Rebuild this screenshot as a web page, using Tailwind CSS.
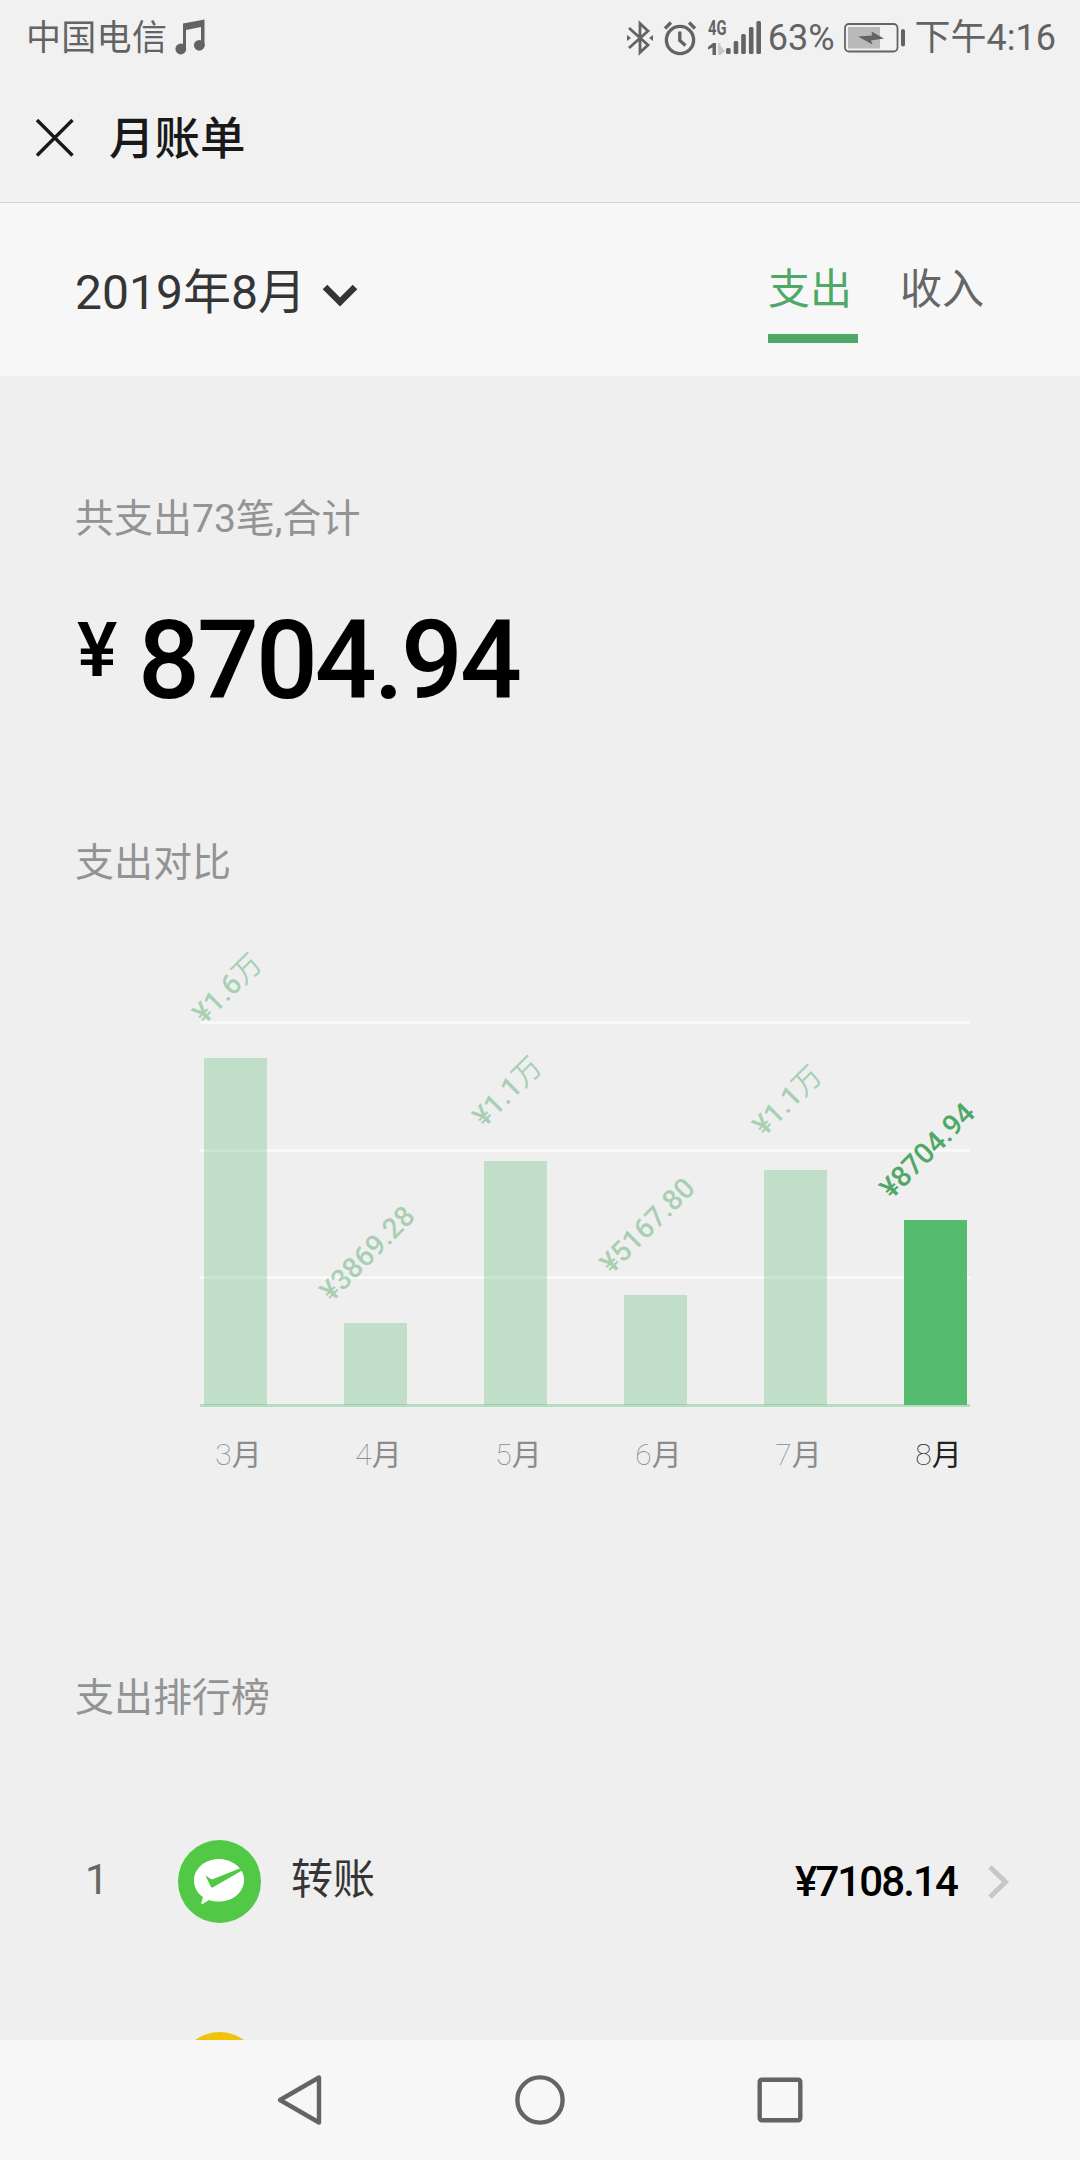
<!DOCTYPE html>
<html lang="zh-CN">
<head>
    <meta charset="UTF-8">
    <meta name="viewport" content="width=device-width, initial-scale=1.0">
    <title>月账单</title>
    <script src="https://cdn.jsdelivr.net/npm/@tailwindcss/browser@4"></script>
</head>
<body class="w-[1080px] h-[2160px] overflow-hidden flex flex-col bg-[#efefef] font-['Roboto','Noto_Sans_CJK_SC',sans-serif] leading-none">
    <!-- Status bar -->
    <div class="h-[74px] shrink-0 flex items-center pt-[2px] pl-[26px] pr-[24px] bg-[#f1f1f1] text-[#636363] text-[36px]">
        <span class="text-[35px] tracking-[0.3px]">中国电信</span>
        <svg class="ml-[8px] -mt-[2px] w-[30px] h-[36px]" viewBox="0 0 30 36" fill="currentColor">
            <path d="M8 4.5 L29.5 0.5 V27 H26 V8 L11 11 V30 H8 Z"/>
            <circle cx="5.8" cy="30" r="5.4"/>
            <circle cx="24.3" cy="26.3" r="5.4"/>
        </svg>
        <div class="ml-auto flex items-center">
            <svg class="w-[28px] h-[36px]" viewBox="0 0 28 36" fill="none" stroke="currentColor" stroke-width="2.8">
                <path d="M3 8 L22 25 L14 32.5 V3.5 L22 11 L3 28"/>
                <path d="M1 15 L5 18 L1 21 Z M27 15 L23 18 L27 21 Z" fill="currentColor" stroke="none"/>
            </svg>
            <svg class="ml-[9px] w-[34px] h-[36px]" viewBox="0 0 34 36" fill="none" stroke="currentColor" stroke-width="3.4">
                <circle cx="17" cy="20" r="13.6"/>
                <path d="M16.8 11.5 V20.5 L22.5 25.5"/>
                <path d="M2 8.5 L8 2.5 M32 8.5 L26 2.5"/>
            </svg>
            <div class="ml-[11px] w-[19px] h-[36px] flex flex-col justify-between">
                <span class="block h-[17px] w-[30px] origin-top-left scale-x-[0.7] text-[21px] leading-[17px] font-bold">4G</span>
                <svg class="w-[19px] h-[14px]" viewBox="0 0 19 14" fill="currentColor">
                    <path d="M0 5 L5 1 H8 V13 H4.5 V5.5 L0 7.5 Z"/>
                    <path class="text-[#c9c9c9]" d="M10 1 H12.5 V4 L17 9 L12.5 13 H10 Z"/>
                </svg>
            </div>
            <svg class="-ml-[1px] w-[36px] h-[36px]" viewBox="0 0 36 36" fill="currentColor">
                <rect x="0" y="28" width="4.6" height="6" rx="1.5"/>
                <rect x="7.7" y="21" width="4.6" height="13" rx="1.5"/>
                <rect x="15.2" y="14" width="4.6" height="20" rx="1.5"/>
                <rect x="22.9" y="7" width="4.6" height="27" rx="1.5"/>
                <rect x="30.4" y="1" width="4.6" height="33" rx="1.5"/>
            </svg>
            <span class="ml-[6px]">63%</span>
            <svg class="ml-[9px] w-[62px] h-[30px]" viewBox="0 0 62 30" fill="none" stroke="currentColor">
                <rect x="1" y="1" width="52.5" height="27.5" rx="4" stroke-width="1.8"/>
                <rect x="4" y="4" width="32" height="21.5" fill="#b9b9b9" stroke="none"/>
                <path d="M14 13.5 L28 12.5 L27.5 8.5 L40 15.5 L27 17.5 L28.5 21.5 Z" fill="currentColor" stroke="none"/>
                <rect x="57" y="6" width="4" height="17.5" rx="2" fill="currentColor" stroke="none"/>
            </svg>
            <span class="ml-[9px]">下午4:16</span>
        </div>
    </div>

    <!-- Title bar -->
    <header class="h-[129px] shrink-0 flex items-center pl-[36px] bg-[#f1f1f1] border-b border-[#d4d4d4] text-[#191919]">
        <svg class="w-[38px] h-[38px]" viewBox="0 0 38 38" fill="none" stroke="currentColor" stroke-width="3.4">
            <path d="M1 1 L36.5 36.5 M36.5 1 L1 36.5"/>
        </svg>
        <h1 class="ml-[35px] pt-[4px] text-[45.5px] font-medium">月账单</h1>
    </header>

    <!-- Month picker and tabs -->
    <div class="h-[173px] shrink-0 flex justify-between bg-[#f7f7f7] pl-[75px] pr-[84px]">
        <div class="flex items-center pt-[6px] text-[48px] text-[#353535]">
            <span>2019年8月</span>
            <svg class="ml-[16px] mt-[6px] w-[36px] h-[24px]" viewBox="0 0 36 24" fill="none" stroke="currentColor" stroke-width="6.5">
                <path d="M3 3 L18 18 L33 3"/>
            </svg>
        </div>
        <div class="flex pt-[66px] text-[42px]">
            <div class="w-[90px] h-[74px] border-b-[9px] border-[#50a868] text-[#50a868]">支出</div>
            <div class="ml-[42px] w-[96px] text-[#666]">收入</div>
        </div>
    </div>

    <main class="h-[1664px] shrink-0 overflow-hidden px-[75px] text-[#939393]">
        <p class="pt-[124px] text-[39px]">共支出73笔,合计</p>
        <div class="mt-[68px] h-[96px] flex items-start text-black font-medium">
            <span class="w-[63px] pt-[5px] pl-[2px] text-[76px]">¥</span>
            <span class="text-[109px] tracking-[-3px]">8704.94</span>
        </div>

        <h2 class="mt-[141px] text-[39px]">支出对比</h2>

        <!-- Bar chart -->
        <div class="relative ml-[125px] mt-[138px] w-[770px] h-[386px]">
            <div class="absolute inset-0 flex flex-col justify-between">
                <div class="h-[3px] bg-[#f9f9f9]"></div>
                <div class="h-[3px] bg-[#f9f9f9]"></div>
                <div class="h-[3px] bg-[#f9f9f9]"></div>
                <div class="h-[3px] bg-[#b6dcc2]"></div>
            </div>
            <div class="absolute inset-0 pl-[4px] pb-[2px] flex items-end gap-[77px] text-[28.5px] font-medium text-[#50a868]/45">
                <div class="relative w-[63px] h-[347px] bg-[#55bb6e]/30">
                    <span class="absolute left-[24px] -top-[69px] -translate-1/2 -rotate-45 whitespace-nowrap">¥1.6<span class="font-normal">万</span></span>
                </div>
                <div class="relative w-[63px] h-[82px] bg-[#55bb6e]/30">
                    <span class="absolute left-[24px] -top-[69px] -translate-1/2 -rotate-45 whitespace-nowrap">¥3869.28</span>
                </div>
                <div class="relative w-[63px] h-[244px] bg-[#55bb6e]/30">
                    <span class="absolute left-[24px] -top-[69px] -translate-1/2 -rotate-45 whitespace-nowrap">¥1.1<span class="font-normal">万</span></span>
                </div>
                <div class="relative w-[63px] h-[110px] bg-[#55bb6e]/30">
                    <span class="absolute left-[24px] -top-[69px] -translate-1/2 -rotate-45 whitespace-nowrap">¥5167.80</span>
                </div>
                <div class="relative w-[63px] h-[235px] bg-[#55bb6e]/30">
                    <span class="absolute left-[24px] -top-[69px] -translate-1/2 -rotate-45 whitespace-nowrap">¥1.1<span class="font-normal">万</span></span>
                </div>
                <div class="relative w-[63px] h-[185px] bg-[#55bb6e] text-[#50a868]">
                    <span class="absolute left-[24px] -top-[69px] -translate-1/2 -rotate-45 whitespace-nowrap">¥8704.94</span>
                </div>
            </div>
        </div>
        <div class="ml-[132px] mt-[33px] flex gap-[77px] text-[30px] text-[#8c8c8c]">
            <div class="w-[63px] text-center"><span class="font-thin">3</span>月</div>
            <div class="w-[63px] text-center"><span class="font-thin">4</span>月</div>
            <div class="w-[63px] text-center"><span class="font-thin">5</span>月</div>
            <div class="w-[63px] text-center"><span class="font-thin">6</span>月</div>
            <div class="w-[63px] text-center"><span class="font-thin">7</span>月</div>
            <div class="w-[63px] text-center text-[#222]"><span class="font-thin">8</span>月</div>
        </div>

        <h2 class="mt-[209px] text-[39px]">支出排行榜</h2>

        <!-- Ranking -->
        <div class="mt-[122px] h-[83px] flex items-center">
            <span class="w-[103px] pl-[10px] pb-[3px] text-[42px] text-[#666]">1</span>
            <svg class="w-[83px] h-[83px]" viewBox="0 0 83 83">
                <circle cx="41.5" cy="41.5" r="41.5" fill="#52c847"/>
                <path d="M41 19 C54 19 65 28 66 38 C67 51 56 61.5 41 61.5 C37 61.5 34 61 31 60 L24.5 64 C23.5 64.5 23 63.5 23.5 62.5 L25 57 C19 53 16 47 16 40.5 C16 28.5 27 19 41 19 Z" fill="#fff"/>
                <path d="M27.5 35.5 C30 37 32 38.5 34 39.5 L61.5 28.5 L64 30.5 L35.5 47 C34 48 33 47.5 32.5 46 Z" fill="#52c847"/>
            </svg>
            <span class="ml-[30px] pb-[3px] text-[42px] text-[#353535]">转账</span>
            <span class="ml-auto text-[42px] tracking-[-1.9px] font-medium text-black">¥7108.14</span>
            <svg class="ml-[30px] -mr-[6px] w-[24px] h-[34px]" viewBox="0 0 24 34" fill="none" stroke="#c7c7cb" stroke-width="5">
                <path d="M3 2 L18.5 17 L3 32"/>
            </svg>
        </div>
        <div class="mt-[109px] ml-[103px] w-[83px] h-[83px] rounded-full bg-[#f0c20c]"></div>
    </main>

    <!-- System navigation -->
    <nav class="h-[120px] shrink-0 bg-[#f7f7f7] flex items-center justify-center gap-[190px]">
        <svg class="w-[50px] h-[52px]" viewBox="0 0 50 52" fill="none" stroke="#646464" stroke-width="4.4" stroke-linejoin="round">
            <path d="M44 3.5 V48.5 L5 26 Z"/>
        </svg>
        <svg class="w-[50px] h-[50px]" viewBox="0 0 50 50" fill="none" stroke="#646464" stroke-width="4.4">
            <circle cx="25" cy="25" r="22.6"/>
        </svg>
        <svg class="w-[50px] h-[50px]" viewBox="0 0 50 50" fill="none" stroke="#646464" stroke-width="4.4">
            <rect x="4.7" y="4.7" width="40.6" height="40.6" rx="2"/>
        </svg>
    </nav>
</body>
</html>
